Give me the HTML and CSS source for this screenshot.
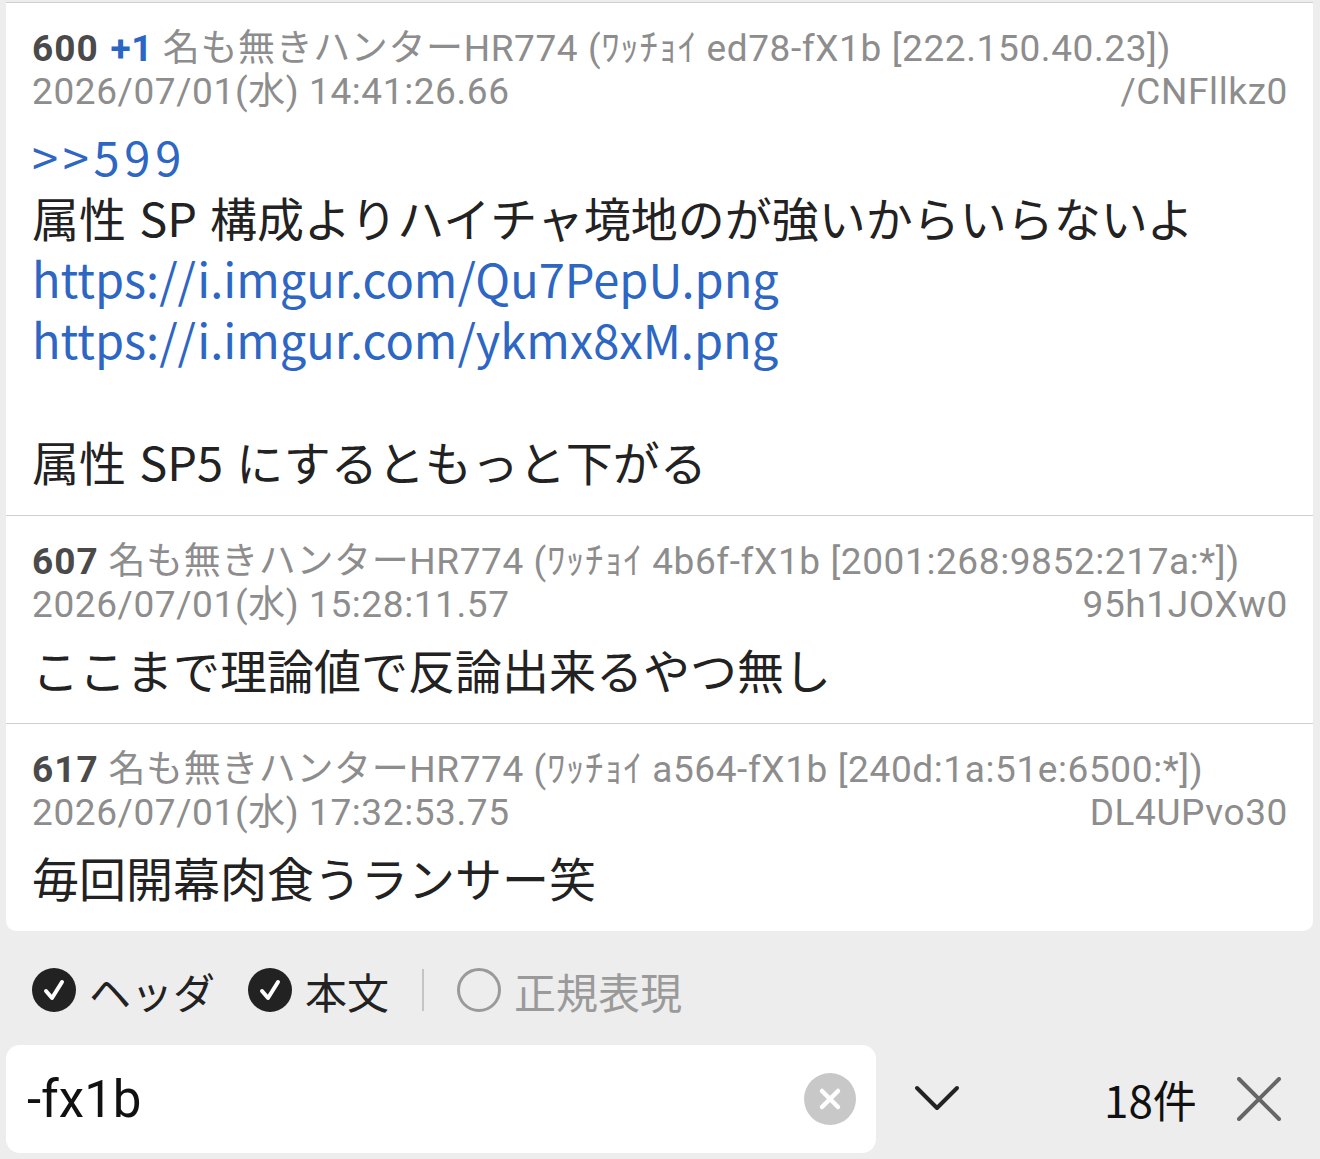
FILE: index.html
```html
<!DOCTYPE html>
<html lang="ja">
<head>
  <meta charset="UTF-8">
  <meta name="viewport" content="width=device-width, initial-scale=1.0">
  <title>スレッド内検索</title>
  <link rel="stylesheet" href="styles.css">
</head>
<body>
  <div class="thread">
    <article class="post">
      <div class="post-head">
        <div class="head-line"><span class="res-num">600</span> <span class="res-plus">+1</span> 名も無きハンターHR774 (ﾜｯﾁｮｲ ed78-fX1b [222.150.40.23])</div>
        <div class="head-line head-meta"><span>2026/07/01(水) 14:41:26.66</span><span>/CNFllkz0</span></div>
      </div>
      <div class="post-body">
        <a class="link anchor" href="#">&gt;&gt;599</a><br>
        属性<span class="latin">SP</span>構成よりハイチャ境地のが強いからいらないよ<br>
        <a class="link" href="#">https://i.imgur.com/Qu7PepU.png</a><br>
        <a class="link" href="#">https://i.imgur.com/ykmx8xM.png</a><br>
        <br>
        属性<span class="latin">SP5</span>にするともっと下がる
      </div>
    </article>

    <article class="post">
      <div class="post-head">
        <div class="head-line"><span class="res-num">607</span> 名も無きハンターHR774 (ﾜｯﾁｮｲ 4b6f-fX1b [2001:268:9852:217a:*])</div>
        <div class="head-line head-meta"><span>2026/07/01(水) 15:28:11.57</span><span>95h1JOXw0</span></div>
      </div>
      <div class="post-body">ここまで理論値で反論出来るやつ無し</div>
    </article>

    <article class="post">
      <div class="post-head">
        <div class="head-line"><span class="res-num">617</span> 名も無きハンターHR774 (ﾜｯﾁｮｲ a564-fX1b [240d:1a:51e:6500:*])</div>
        <div class="head-line head-meta"><span>2026/07/01(水) 17:32:53.75</span><span>DL4UPvo30</span></div>
      </div>
      <div class="post-body">毎回開幕肉食うランサー笑</div>
    </article>
  </div>

  <div class="find-bar">
    <div class="find-options">
      <label class="option">
        <span class="check on">
          <svg viewBox="0 0 44 44"><path d="M14 23 L20 30 L30 14" /></svg>
        </span>
        ヘッダ
      </label>
      <label class="option">
        <span class="check on">
          <svg viewBox="0 0 44 44"><path d="M14 23 L20 30 L30 14" /></svg>
        </span>
        本文
      </label>
      <span class="option-divider"></span>
      <label class="option off">
        <span class="check"></span>
        正規表現
      </label>
    </div>

    <div class="find-row">
      <div class="find-field">
        <span class="find-text">-fx1b</span>
        <span class="clear-btn">
          <svg viewBox="0 0 52 52"><path d="M18 18 L34 34 M34 18 L18 34" /></svg>
        </span>
      </div>
      <span class="next-btn">
        <svg viewBox="0 0 46 28"><path d="M3 3 L23 23 L43 3" /></svg>
      </span>
      <span class="hit-count">18件</span>
      <span class="close-btn">
        <svg viewBox="0 0 44 44"><path d="M2 2 L42 42 M42 2 L2 42" /></svg>
      </span>
    </div>
  </div>
</body>
</html>
```

FILE: styles.css
```css
* {
  margin: 0;
  padding: 0;
  box-sizing: border-box;
}

body {
  font-family: Roboto, "Noto Sans CJK JP", sans-serif;
  background: #ededed;
  color: #222;
  width: 1320px;
  height: 1159px;
  overflow: hidden;
  padding-top: 2px;
}

/* thread card */
.thread {
  margin: 0 7px 0 6px;
  background: #fff;
  border-top: 1px solid #cfcfcf;
  border-radius: 0 0 10px 10px;
}

.post {
  padding: 24px 25px 24px 26px;
}

.post + .post {
  border-top: 1px solid #cfcfcf;
}

.head-line {
  font-size: 37px;
  line-height: 43px;
  letter-spacing: 0.6px;
  color: #8d8d8d;
  white-space: nowrap;
}

.head-meta {
  display: flex;
  justify-content: space-between;
}

.res-num {
  color: #4a4a4a;
  font-weight: 700;
  letter-spacing: 1px;
}

.res-plus {
  color: #2a67c4;
  font-weight: 700;
  margin-left: 2px;
}

.post-body {
  margin-top: 12px;
  font-family: "Noto Sans CJK JP", sans-serif;
  font-size: 47px;
  line-height: 61px;
  color: #222;
}

/* latin words inside japanese lines get a little air */
.latin {
  margin: 0 0.28em;
}

.link {
  color: #2d66c3;
  text-decoration: none;
}

.anchor {
  letter-spacing: 0.1em;
}

/* find bar */
.find-bar {
  padding: 27px 0 6px 6px;
}

.find-options {
  display: flex;
  align-items: center;
  height: 64px;
  padding-left: 26px;
  font-family: "Noto Sans CJK JP", sans-serif;
  font-size: 42px;
  color: #222;
}

.option {
  display: flex;
  align-items: center;
  gap: 13px;
  margin-right: 33px;
}

.option.off {
  color: #9a9a9a;
}

.check {
  width: 44px;
  height: 44px;
  border-radius: 50%;
  border: 3px solid #9a9a9a;
  display: flex;
}

.check.on {
  background: #222;
  border: none;
}

.check svg {
  width: 44px;
  height: 44px;
  fill: none;
  stroke: #fff;
  stroke-width: 4;
  stroke-linecap: round;
  stroke-linejoin: round;
}

.option-divider {
  width: 2px;
  height: 42px;
  background: #c4c4c4;
  margin-right: 33px;
}

.find-row {
  display: flex;
  align-items: center;
  margin-top: 23px;
}

.find-field {
  width: 870px;
  height: 108px;
  background: #fff;
  border-radius: 14px;
  display: flex;
  align-items: center;
  justify-content: space-between;
  padding: 0 20px 0 21px;
}

.find-text {
  font-family: Roboto, sans-serif;
  font-size: 51px;
  color: #111;
}

.clear-btn {
  width: 52px;
  height: 52px;
  border-radius: 50%;
  background: #c8c8c8;
  display: flex;
}

.clear-btn svg {
  width: 52px;
  height: 52px;
  stroke: #fff;
  stroke-width: 4.5;
  stroke-linecap: round;
}

.next-btn {
  margin-left: 38px;
  display: flex;
}

.next-btn svg {
  width: 46px;
  height: 28px;
  fill: none;
  stroke: #222;
  stroke-width: 4;
  stroke-linecap: round;
  stroke-linejoin: round;
}

.hit-count {
  margin-left: 144px;
  font-family: "Noto Sans CJK JP", sans-serif;
  font-size: 44px;
  color: #111;
}

.close-btn {
  margin-left: 40px;
  display: flex;
}

.close-btn svg {
  width: 44px;
  height: 44px;
  stroke: #666;
  stroke-width: 4;
  stroke-linecap: round;
}
```
